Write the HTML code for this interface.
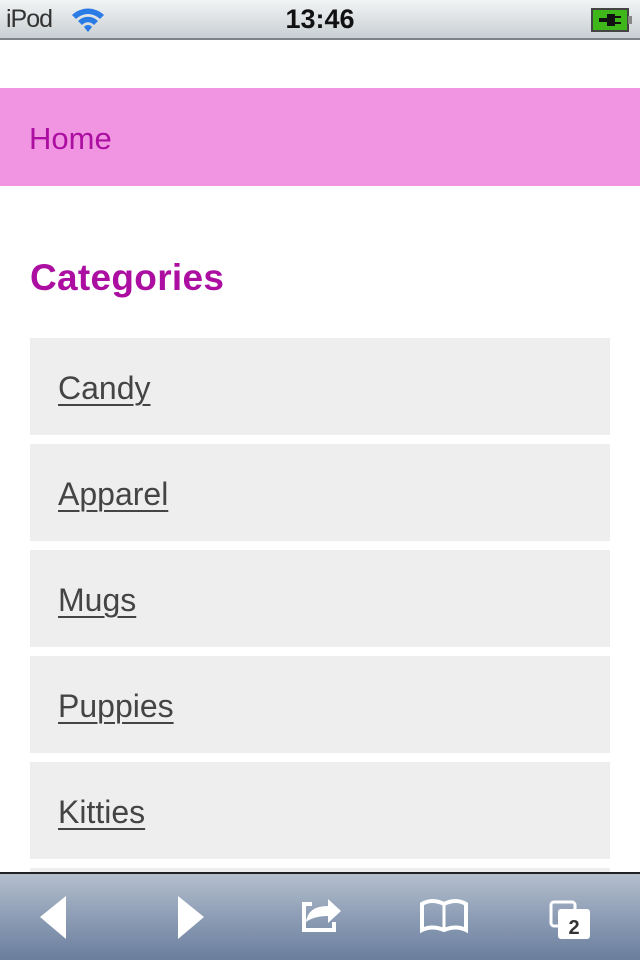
<!DOCTYPE html>
<html><head><meta charset="utf-8"><style>
*{margin:0;padding:0;box-sizing:border-box}
body{width:640px;height:960px;overflow:hidden;background:#fff;font-family:"Liberation Sans",Arial,sans-serif;position:relative}
.sb{position:absolute;top:0;left:0;width:640px;height:40px;background:linear-gradient(#f2f4f5,#c9cfd3);border-bottom:2px solid #7c8288;z-index:2}
.sb .ipod{position:absolute;left:6px;top:5px;font-size:25px;color:#333;letter-spacing:-1px}
.sb .time{position:absolute;left:0;width:640px;text-align:center;top:4px;font-size:27px;font-weight:bold;color:#111}
.home{position:absolute;top:88px;left:0;width:640px;height:98px;background:#f195e3;color:#ab0ea1;font-size:31px;padding:33px 0 0 29px}
h2{position:absolute;top:257px;left:30px;font-size:37px;color:#ab0ea1;font-weight:bold;letter-spacing:0.3px}
.it{position:absolute;left:30px;width:580px;height:97px;background:#eeeeee;padding:32px 0 0 28px;font-size:32px;color:#444;text-decoration:underline;text-decoration-thickness:2px;text-underline-offset:5px}
.tb{position:absolute;top:872px;left:0;width:640px;height:88px;border-top:2px solid #222;background:linear-gradient(#b4bfcd,#8d9db5 50%,#6a7e9d);z-index:2}
</style></head><body>
<div class="sb"><span class="ipod">iPod</span>
<svg style="position:absolute;left:71px;top:6px" width="34" height="28" viewBox="0 0 34 28"><path d="M1 9 A23 23 0 0 1 33 9 L29 13 A17 17 0 0 0 5 13Z M7 15 A14 14 0 0 1 27 15 L23 19 A8 8 0 0 0 11 19Z M13 21 A5 5 0 0 1 21 21 L17 26Z" fill="#2a7be6"/></svg>
<span class="time">13:46</span>
<svg style="position:absolute;left:591px;top:8px" width="42" height="24" viewBox="0 0 42 24"><rect x="1" y="1" width="36" height="22" fill="#3fb61a" stroke="#444" stroke-width="2"/><rect x="37" y="8" width="4" height="8" fill="#888"/><path d="M8 10h8v-4h8v12h-8v-4h-8z M24 8h6v2h-6z M24 14h6v2h-6z" fill="#111"/></svg>
</div>
<div class="home">Home</div>
<h2>Categories</h2>
<div class="it" style="top:338px">Candy</div>
<div class="it" style="top:444px">Apparel</div>
<div class="it" style="top:550px">Mugs</div>
<div class="it" style="top:656px">Puppies</div>
<div class="it" style="top:762px">Kitties</div>
<div class="it" style="top:868px;height:4px"></div>
<div class="tb">
<svg style="position:absolute;left:0;top:0" width="640" height="88" viewBox="0 0 640 88">
<path d="M66 22 L40 43 L66 65Z" fill="#fff"/>
<path d="M178 22 L204 43 L178 65Z" fill="#fff"/>
<path d="M302 28 h10 v4 h-6 v22 h26 v-6 h4 v10 h-34z" fill="#fff"/>
<path d="M306 48 q2 -16 22 -16 v-7 l13 12 l-13 12 v-7 q-14 0 -22 6z" fill="#fff"/>
<path d="M422 30 q10 -6 22 0 q12 -6 22 0 v26 q-10 -5 -22 0 q-12 -5 -22 0z" fill="none" stroke="#fff" stroke-width="4"/>
<path d="M444 30 v26" stroke="#fff" stroke-width="3"/>
<rect x="551" y="28" width="24" height="24" rx="3" fill="none" stroke="#fff" stroke-width="3"/>
<rect x="558" y="35" width="32" height="30" rx="3" fill="#fff"/>
<text x="574" y="60" font-family="Liberation Sans" font-weight="bold" font-size="20" fill="#333" text-anchor="middle">2</text>
</svg></div>
</body></html>
